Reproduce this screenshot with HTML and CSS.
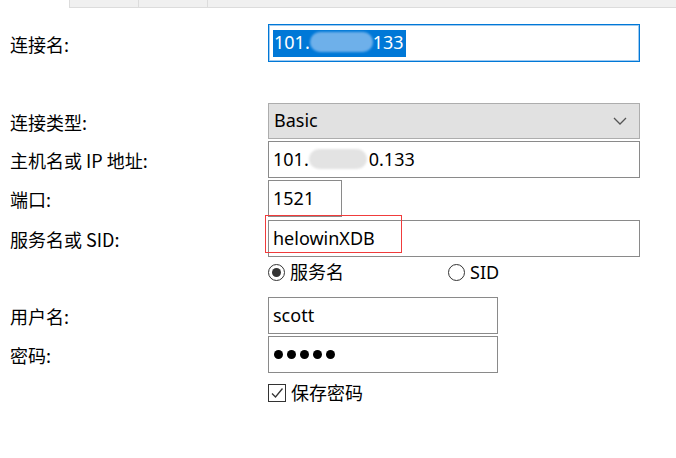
FILE: index.html
```html
<!DOCTYPE html>
<html lang="zh-CN">
<head>
<meta charset="utf-8">
<link rel="stylesheet" href="styles.css">
</head>
<body>
<div class="tabs"><div class="tab"></div><div class="tab"></div><div class="tab tab-last"></div></div>

<div class="row r-name">
  <div class="label">连接名:</div>
  <div class="input input-focus wide"><span class="sel">101.<span class="blob blob-sel"></span>133</span></div>
</div>

<div class="row r-type">
  <div class="label">连接类型:</div>
  <div class="combo wide"><span>Basic</span>
    <svg class="chev" width="14" height="8" viewBox="0 0 14 8"><path d="M1 1 L7 7 L13 1" fill="none" stroke="#555" stroke-width="1.3"/></svg>
  </div>
</div>

<div class="row r-host">
  <div class="label">主机名或 IP 地址:</div>
  <div class="input wide">101.<span class="blob blob-gray"></span>0.133</div>
</div>

<div class="row r-port">
  <div class="label">端口:</div>
  <div class="input port">1521</div>
</div>

<div class="row r-sid">
  <div class="label">服务名或 SID:</div>
  <div class="ctrl">
    <div class="input wide">helowinXDB</div>
    <div class="redbox"></div>
  </div>
</div>

<div class="row r-radio">
  <div class="label"></div>
  <div class="radios">
    <div class="opt opt-first"><span class="radio on"></span>服务名</div>
    <div class="opt"><span class="radio"></span>SID</div>
  </div>
</div>

<div class="row r-user">
  <div class="label">用户名:</div>
  <div class="input mid">scott</div>
</div>

<div class="row r-pwd">
  <div class="label">密码:</div>
  <div class="input mid dots"><i></i><i></i><i></i><i></i><i></i></div>
</div>

<div class="row r-check">
  <div class="label"></div>
  <div class="opt"><span class="check"><svg width="14" height="14" viewBox="0 0 14 14"><path d="M2 7.5 L5.5 11 L12.5 2.5" fill="none" stroke="#333" stroke-width="1.3"/></svg></span>保存密码</div>
</div>
</body>
</html>
```

FILE: styles.css
```css
html, body {
  margin: 0;
  padding: 0;
  background: #fff;
}
body {
  font-family: "Noto Sans", "Noto Sans CJK SC", sans-serif;
  font-size: 18px;
  color: #000;
  width: 676px;
  height: 458px;
  overflow: hidden;
}
.tabs {
  margin-left: 69px;
  height: 7px;
  display: flex;
  background: #f0f0f0;
  border-bottom: 1px solid #dcdcdc;
  border-left: 1px solid #dcdcdc;
}
.tab {
  width: 68px;
  border-right: 1px solid #dcdcdc;
}
.tab-last {
  flex: 1;
  border-right: none;
}
.row {
  display: flex;
  align-items: center;
  padding-left: 10px;
}
.label {
  width: 258px;
  flex: none;
  font-family: "Noto Sans CJK SC", sans-serif;
  line-height: 20px;
  padding-top: 1px;
}
.input {
  box-sizing: border-box;
  height: 37px;
  border: 1px solid #8a8a8a;
  display: flex;
  align-items: center;
  padding: 0 0 2px 4px;
  background: #fff;
  white-space: nowrap;
}
.wide { width: 372px; }
.mid { width: 230px; }
.port { width: 74px; }
.input-focus {
  height: 38px;
  padding-bottom: 0;
  border: 1px solid #0078d7;
  box-shadow: inset 0 0 0 1px #9fcaf0;
}
.sel {
  background: #0078d7;
  color: #fff;
  padding: 0 2px 2px 1px;
  height: 27px;
  box-sizing: border-box;
  display: flex;
  align-items: center;
}
.blob {
  display: inline-block;
  height: 20px;
  border-radius: 10px;
  filter: blur(1px);
}
.blob-sel {
  width: 63px;
  background: #6eb0ea;
}
.blob-gray {
  width: 58px;
  background: #e3e3e3;
  margin-right: 2px;
}
.r-name { margin-top: 16px; }
.r-type { margin-top: 41px; }
.r-host { margin-top: 2px; }
.r-port { margin-top: 2px; }
.r-sid { margin-top: 3px; }
.r-radio { margin-top: 5px; height: 20px; }
.r-user { margin-top: 15px; }
.r-pwd { margin-top: 2px; }
.r-check { margin-top: 10px; height: 20px; }
.combo {
  box-sizing: border-box;
  height: 36px;
  border: 1px solid #adadad;
  background: #e1e1e1;
  display: flex;
  align-items: center;
  justify-content: space-between;
  padding: 0 12px 2px 5px;
}
.chev { display: block; margin-top: 2px; }
.ctrl { position: relative; }
.redbox {
  position: absolute;
  left: -3px;
  top: -5px;
  width: 137px;
  height: 38px;
  border: 1px solid #f03c3c;
  box-sizing: border-box;
}
.radios { display: flex; }
.opt {
  display: flex;
  align-items: center;
  font-family: "Noto Sans", "Noto Sans CJK SC", sans-serif;
  line-height: 20px;
}
.opt-first { width: 180px; }
.radio {
  box-sizing: border-box;
  width: 17px;
  height: 17px;
  border: 1px solid #333;
  border-radius: 50%;
  margin-right: 5px;
  display: flex;
  align-items: center;
  justify-content: center;
}
.radio.on::after {
  content: "";
  width: 9px;
  height: 9px;
  border-radius: 50%;
  background: #333;
}
.check {
  box-sizing: border-box;
  width: 18px;
  height: 18px;
  border: 1px solid #333;
  margin-right: 5px;
  display: flex;
  align-items: center;
  justify-content: center;
}
.check svg { display: block; }
.dots { gap: 4px; padding-left: 5px; padding-bottom: 0; }
.dots i {
  width: 9px;
  height: 9px;
  border-radius: 50%;
  background: #000;
}
```
